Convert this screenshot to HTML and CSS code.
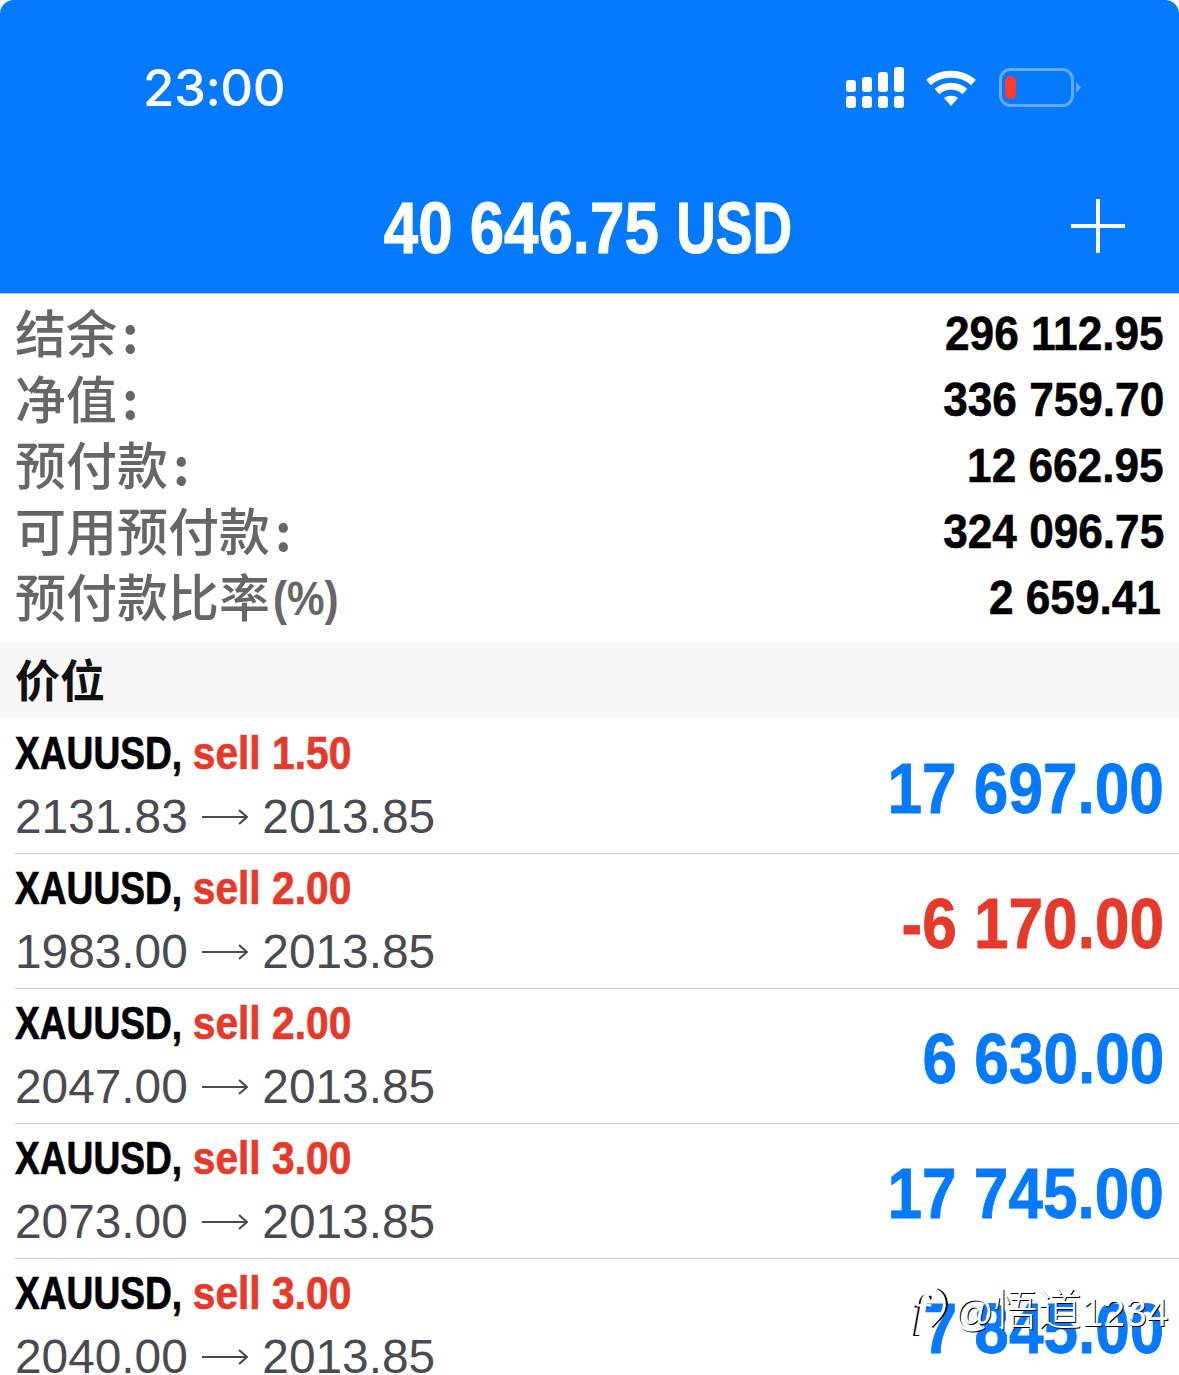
FILE: index.html
```html
<!DOCTYPE html>
<html lang="zh">
<head>
<meta charset="utf-8">
<title>Trade</title>
<link rel="stylesheet" href="styles.css">
</head>
<body>
<svg class="defs" width="0" height="0" aria-hidden="true">
  <symbol id="arrow" viewBox="0 0 46 16"><path d="M0 8H45M37 1L45 8L37 15" fill="none" stroke="#4a4a50" stroke-width="2.200"/></symbol>
</svg>
<div class="screen">
  <header class="top">
    <div class="status">
      <span class="time">23:00</span>
      <div class="status-icons">
        <svg class="signal" width="58" height="41" viewBox="0 0 58 41" fill="#fff">
          <rect x="0" y="13" width="10" height="12" rx="3"/><rect x="16" y="10" width="10" height="15" rx="3"/><rect x="32" y="5" width="10" height="20" rx="3"/><rect x="48" y="0" width="10" height="25" rx="3"/>
          <rect x="0" y="29" width="10" height="12" rx="3"/><rect x="16" y="29" width="10" height="12" rx="3"/><rect x="32" y="29" width="10" height="12" rx="3"/><rect x="48" y="29" width="10" height="12" rx="3"/>
        </svg>
        <svg class="wifi" width="50" height="38" viewBox="0 0 50 38" fill="none" stroke="#fff" stroke-width="7">
          <path d="M2.500 13.500C15 2.500 35 2.500 47.500 13.500"/>
          <path d="M11 22.500C19 15.500 31 15.500 39 22.500"/>
          <path d="M18 29L25 37L32 29C28 26 22 26 18 29Z" fill="#fff" stroke="none"/>
        </svg>
        <svg class="battery" width="83" height="39" viewBox="0 0 83 39">
          <rect x="1.500" y="1.500" width="72" height="36" rx="10" fill="none" stroke="#66a9ff" stroke-width="3"/>
          <rect x="6" y="8" width="11" height="23" rx="5" fill="#ff3b30"/>
          <path d="M77 14L82 19.500L77 25Z" fill="#66a9ff"/>
        </svg>
      </div>
    </div>
    <div class="title-row">
      <h1 class="balance"><span class="squeeze mid"><span class="bal-num">40 646.75</span> <span class="bal-cur">USD</span></span></h1>
      <svg class="plus" width="54" height="54" viewBox="0 0 54 54" stroke="#fff" stroke-width="4"><path d="M0 27H54M27 0V54"/></svg>
    </div>
  </header>

  <section class="summary">
    <div class="sum-row"><span class="sum-label">结余<span class="colon">:</span></span><span class="sum-value squeeze end">296 112.95</span></div>
    <div class="sum-row"><span class="sum-label">净值<span class="colon">:</span></span><span class="sum-value squeeze end">336 759.70</span></div>
    <div class="sum-row"><span class="sum-label">预付款<span class="colon">:</span></span><span class="sum-value squeeze end">12 662.95</span></div>
    <div class="sum-row"><span class="sum-label">可用预付款<span class="colon">:</span></span><span class="sum-value squeeze end">324 096.75</span></div>
    <div class="sum-row"><span class="sum-label">预付款比率<span class="pct">(%)</span></span><span class="sum-value squeeze end inset">2 659.41</span></div>
  </section>

  <div class="band">价位</div>

  <section class="trades">
    <article class="trade">
      <div class="trade-info">
        <div class="trade-name squeeze start">XAUUSD, <span class="sell">sell 1.50</span></div>
        <div class="trade-price">2131.83 <svg class="arrow" width="46" height="16"><use href="#arrow"/></svg> 2013.85</div>
      </div>
      <div class="profit squeeze end">17 697.00</div>
    </article>
    <article class="trade">
      <div class="trade-info">
        <div class="trade-name squeeze start">XAUUSD, <span class="sell">sell 2.00</span></div>
        <div class="trade-price">1983.00 <svg class="arrow" width="46" height="16"><use href="#arrow"/></svg> 2013.85</div>
      </div>
      <div class="profit loss squeeze end">-6 170.00</div>
    </article>
    <article class="trade">
      <div class="trade-info">
        <div class="trade-name squeeze start">XAUUSD, <span class="sell">sell 2.00</span></div>
        <div class="trade-price">2047.00 <svg class="arrow" width="46" height="16"><use href="#arrow"/></svg> 2013.85</div>
      </div>
      <div class="profit squeeze end">6 630.00</div>
    </article>
    <article class="trade">
      <div class="trade-info">
        <div class="trade-name squeeze start">XAUUSD, <span class="sell">sell 3.00</span></div>
        <div class="trade-price">2073.00 <svg class="arrow" width="46" height="16"><use href="#arrow"/></svg> 2013.85</div>
      </div>
      <div class="profit squeeze end">17 745.00</div>
    </article>
    <article class="trade">
      <div class="trade-info">
        <div class="trade-name squeeze start">XAUUSD, <span class="sell">sell 3.00</span></div>
        <div class="trade-price">2040.00 <svg class="arrow" width="46" height="16"><use href="#arrow"/></svg> 2013.85</div>
      </div>
      <div class="profit squeeze end">7 845.00</div>
    </article>
  </section>

  <div class="watermark">
    <svg class="wm-logo" width="36" height="50" viewBox="0 0 36 50" fill="none">
      <path d="M24 5C33 8 35 18 32 26C29 33 24 36 19 42" stroke="#000" stroke-width="3"/>
      <path d="M22 5C31 8 33 18 30 26C27 33 22 36 17 42" stroke="#fff" stroke-width="3"/>
    </svg>
    <span class="wm-f">f</span>
    <span class="wm-text">@<span class="wm-cjk">悟道</span>1234</span>
  </div>
</div>
</body>
</html>
```
FILE: styles.css
```css
* { box-sizing: border-box; }
html, body { margin: 0; padding: 0; background: #fff; }
body { font-family: "Liberation Sans", "Noto Sans CJK SC", sans-serif; }
.defs { position: absolute; }
.screen { position: relative; width: 1179px; height: 1375px; overflow: hidden; }

.squeeze { display: inline-block; white-space: nowrap; }
.squeeze.start { transform-origin: left center; }
.squeeze.end { transform-origin: right center; }
.squeeze.mid { transform-origin: center; }

.top { height: 294px; background: #057aff; color: #fff; border-radius: 14px 14px 0 0; border-bottom: 1px solid #a6cdf8; }
.status { height: 175px; padding: 67px 97px 0 143px; display: flex; justify-content: space-between; align-items: flex-start; }
.time { font-family: Inter, sans-serif; font-weight: 500; font-size: 51px; line-height: 41px; letter-spacing: -0.5px; }
.status-icons { display: flex; align-items: flex-start; gap: 22px; }
.wifi { margin-top: 2px; }
.battery { margin-left: 1px; margin-top: 1px; }

.title-row { position: relative; display: flex; justify-content: center; align-items: center; height: 106px; padding-right: 3px; }
.balance { margin: 0; font-size: 72px; line-height: 106px; font-weight: 700; }
.balance .squeeze { transform: scaleX(.83); -webkit-text-stroke: 1px #fff; }
.bal-num { display: inline-block; transform: scaleX(1.034); transform-origin: left center; }
.bal-cur { display: inline-block; transform: scaleX(.92); transform-origin: right center; }
.plus { position: absolute; left: 1071px; top: 24px; }

.summary { height: 348px; padding: 7px 15px 1px 16px; }
.sum-row { height: 66px; display: flex; justify-content: space-between; align-items: center; }
.sum-label { font-family: "Noto Sans CJK SC", sans-serif; font-weight: 500; font-size: 51px; line-height: 66px; color: #666; margin-bottom: 7px; margin-left: -1px; white-space: nowrap; }
.colon { margin-left: 5px; font-weight: 700; }
.pct { font-family: "Liberation Sans", sans-serif; font-weight: 700; font-size: 48px; line-height: 48px; display: inline-block; transform: scaleX(.88) translateY(-2px); transform-origin: left center; margin-left: 3px; }
.sum-value { font-weight: 700; font-size: 48px; line-height: 66px; color: #000; transform: scaleX(.92); -webkit-text-stroke: .6px #000; }
.inset { margin-right: 3px; }

.band { height: 76px; padding-left: 15px; background: #f7f7f7; font-family: "Noto Sans CJK SC", sans-serif; font-weight: 700; font-size: 45px; line-height: 74px; color: #111; }

.trades { padding-top: 1px; }
.trade { height: 135px; margin-left: 15px; padding-right: 15px; border-bottom: 1px solid #c9c9cc; display: flex; justify-content: space-between; align-items: center; }
.trade-info { display: flex; flex-direction: column; margin-top: -10px; }
.trade-name { font-weight: 700; font-size: 47px; line-height: 70px; color: #000; transform: scaleX(.79); -webkit-text-stroke: .7px #000; }
.sell { display: inline-block; color: #e53a2b; transform: scaleX(1.097); transform-origin: left center; -webkit-text-stroke: .7px #e53a2b; }
.trade-price { font-size: 47.8px; line-height: 57px; color: #4a4a50; white-space: nowrap; }
.arrow { margin-left: 1px; margin-right: 1px; vertical-align: 8px; }
.profit { font-weight: 700; font-size: 71px; line-height: 80px; color: #057aff; transform: scaleX(.875); -webkit-text-stroke: .8px currentColor; margin-top: 6px; }
.profit.loss { color: #e53a2b; }

.watermark { position: absolute; left: 913px; top: 1285px; width: 262px; height: 52px; color: #fff; }
.wm-logo { position: absolute; left: 0; top: 0; }
.wm-f { position: absolute; left: 2px; top: 2px; font-family: "Liberation Serif", serif; font-style: italic; font-size: 46px; line-height: 46px; font-weight: 700; text-shadow: -2px 1px 0 #000; }
.wm-text { position: absolute; left: 41px; top: -2px; font-size: 39px; line-height: 48px; white-space: nowrap; text-shadow: 1px 1px 0 #000; }
.wm-cjk { font-family: "Noto Sans CJK SC", sans-serif; font-weight: 300; font-size: 44px; }
```
